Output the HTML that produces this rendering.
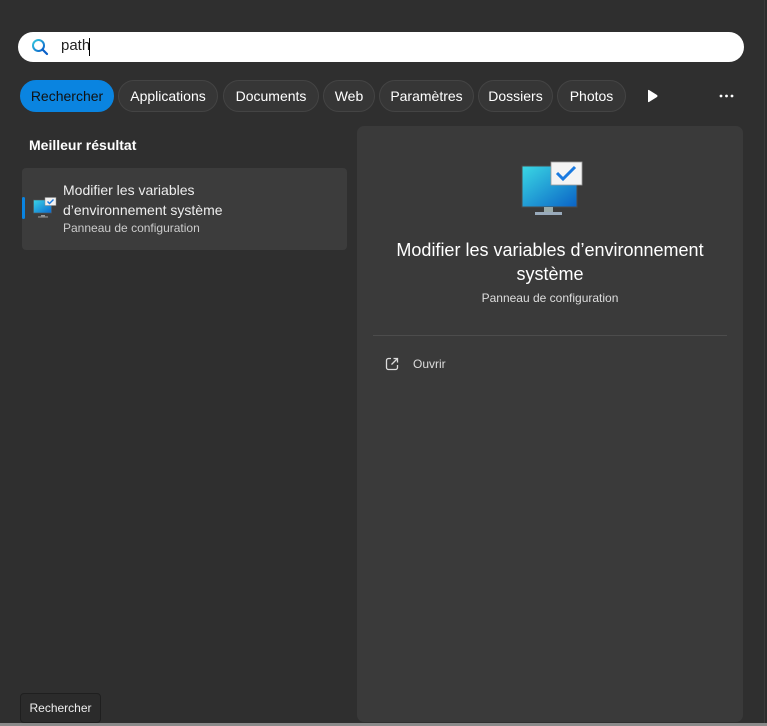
<!DOCTYPE html>
<html><head><meta charset="utf-8"><style>
*{margin:0;padding:0;box-sizing:border-box}
body{width:767px;height:726px;background:#2c2c2c;font-family:"Segoe UI","Liberation Sans",sans-serif;color:#fff;position:relative;overflow:hidden}
.win{position:absolute;left:0;top:0;width:765px;height:723px;background:#2f2f2f;border-right:1px solid #3a3a3a}
.bottom{position:absolute;left:0;top:723px;width:767px;height:3px;background:#8a8a8a}
.search{position:absolute;left:18px;top:32px;width:726px;height:30px;background:#fff;border-radius:15px}
.search .t{position:absolute;left:43px;top:5px;font-size:15px;color:#222}
.search .cur{position:absolute;left:71px;top:6px;width:1px;height:18px;background:#000}
.chip{position:absolute;top:80px;height:32px;border-radius:16px;background:#363636;border:1px solid #444;font-size:14px;line-height:30px;text-align:center;color:#fff}
.chip.a{background:#0a84e0;border-color:#0a84e0;color:#111}
.h{position:absolute;left:29px;top:137px;font-size:14px;font-weight:bold}
.card{position:absolute;left:22px;top:168px;width:325px;height:82px;background:#3c3c3c;border-radius:4px}
.bar{position:absolute;left:22px;top:197px;width:3px;height:22px;background:#0a84e0;border-radius:2px}
.panel{position:absolute;left:357px;top:126px;width:386px;height:596px;background:#3a3a3a;border-radius:7px}
.tip{position:absolute;left:20px;top:693px;width:81px;height:30px;background:#2b2b2b;border:1px solid #1f1f1f;border-radius:4px;font-size:12px;line-height:28px;text-align:center;color:#eee}
</style></head><body>
<div class="win"></div>
<div class="bottom"></div>
<div class="search">
<svg style="position:absolute;left:13px;top:6px" width="18" height="18" viewBox="0 0 18 18"><defs><linearGradient id="g" x1="0" y1="0" x2="1" y2="1"><stop offset="0" stop-color="#35c9e0"/><stop offset="1" stop-color="#0a60c8"/></linearGradient></defs><circle cx="7.5" cy="7.5" r="5.5" fill="none" stroke="url(#g)" stroke-width="2"/><line x1="11.5" y1="11.5" x2="16" y2="16" stroke="#0a60c8" stroke-width="2.2" stroke-linecap="round"/></svg>
<span class="t">path</span><span class="cur"></span>
</div>
<div class="chip a" style="left:20px;width:94px">Rechercher</div>
<div class="chip" style="left:118px;width:100px">Applications</div>
<div class="chip" style="left:223px;width:96px">Documents</div>
<div class="chip" style="left:323px;width:52px">Web</div>
<div class="chip" style="left:379px;width:95px">Paramètres</div>
<div class="chip" style="left:478px;width:75px">Dossiers</div>
<div class="chip" style="left:557px;width:69px">Photos</div>
<svg style="position:absolute;left:647px;top:89px" width="12" height="14" viewBox="0 0 12 14"><path d="M1 1.5Q1 0.5 2 1L10 6Q11 7 10 8L2 13Q1 13.5 1 12.5Z" fill="#fff"/></svg>
<svg style="position:absolute;left:719px;top:94px" width="15" height="4" viewBox="0 0 15 4"><circle cx="2" cy="2" r="1.4" fill="#fff"/><circle cx="7.5" cy="2" r="1.4" fill="#fff"/><circle cx="13" cy="2" r="1.4" fill="#fff"/></svg>
<div class="h">Meilleur résultat</div>
<div class="card"></div>
<div class="bar"></div>
<svg style="position:absolute;left:33px;top:197px" width="24" height="21" viewBox="0 0 24 21"><defs><linearGradient id="m" x1="0" y1="0" x2="1" y2="1"><stop offset="0" stop-color="#3ad4e6"/><stop offset="1" stop-color="#0a6ad0"/></linearGradient></defs><rect x="0.5" y="3" width="18" height="13" fill="url(#m)" stroke="#555" stroke-width="0.6"/><rect x="8" y="18" width="4" height="1.5" fill="#999"/><rect x="5" y="19.3" width="10" height="1.3" fill="#888"/><rect x="12" y="0.5" width="11" height="8" fill="#f2f2f2" stroke="#888" stroke-width="0.5"/><path d="M14.5 4.5l2 2 4-4" fill="none" stroke="#1a7ae0" stroke-width="1.4"/></svg>
<div style="position:absolute;left:63px;top:180px;font-size:14px;line-height:20px;color:#eee">Modifier les variables<br>d’environnement système</div>
<div style="position:absolute;left:63px;top:221px;font-size:12px;color:#ccc">Panneau de configuration</div>
<div class="panel"></div>
<svg style="position:absolute;left:521px;top:161px" width="62" height="55" viewBox="0 0 62 55"><defs><linearGradient id="b" x1="0" y1="0" x2="1" y2="1"><stop offset="0" stop-color="#3ad8e4"/><stop offset="1" stop-color="#0a62c6"/></linearGradient></defs><rect x="1" y="5" width="55" height="41" fill="url(#b)" stroke="#4a4a4a" stroke-width="1"/><rect x="23" y="46" width="9" height="5" fill="#9aa"/><rect x="14" y="51" width="27" height="3" fill="#9ab"/><rect x="30" y="1" width="31" height="23" fill="#f4f4f4" stroke="#999" stroke-width="0.8"/><path d="M36 12l6 6 12-12" fill="none" stroke="#1a7ae0" stroke-width="3"/></svg>
<div style="position:absolute;left:357px;top:238px;width:386px;text-align:center;font-size:18px;line-height:24px;color:#fff">Modifier les variables d’environnement<br>système</div>
<div style="position:absolute;left:357px;top:291px;width:386px;text-align:center;font-size:12px;color:#ddd">Panneau de configuration</div>
<div style="position:absolute;left:373px;top:335px;width:354px;height:1px;background:#4c4c4c"></div>
<svg style="position:absolute;left:385px;top:357px" width="14" height="14" viewBox="0 0 14 14"><path d="M6 1.5H3.5A2 2 0 0 0 1.5 3.5v7a2 2 0 0 0 2 2h7a2 2 0 0 0 2-2V8" fill="none" stroke="#ddd" stroke-width="1.3"/><path d="M8.5 1.5h4v4M12.5 1.5L6.5 7.5" fill="none" stroke="#ddd" stroke-width="1.3"/></svg>
<div style="position:absolute;left:413px;top:357px;font-size:12px;color:#ddd">Ouvrir</div>
<div class="tip">Rechercher</div>
</body></html>
